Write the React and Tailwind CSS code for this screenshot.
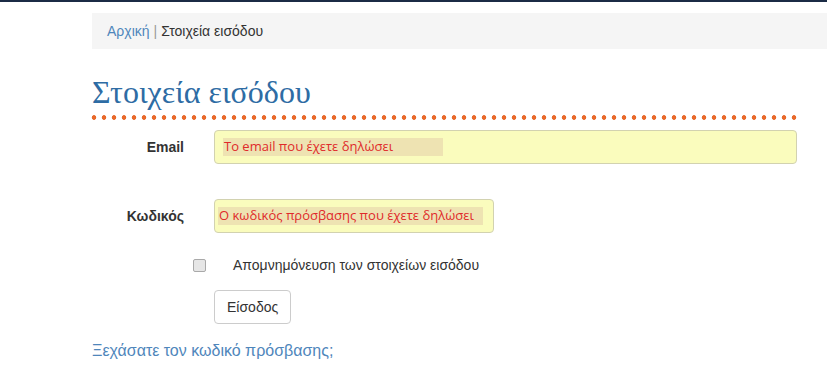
export default function App() {
  return (
    <div className="w-[827px] h-[382px] overflow-hidden bg-white font-['Liberation_Sans',Arial,sans-serif] text-[14px] text-[#333]">
      <div className="h-[2px] bg-[#1b2b45]" />
      <div className="pl-[92px]">
        <div className="mt-[11px] h-[36px] bg-[#f5f5f5] pl-[15px] flex items-center">
          <span className="text-[#4f86bb]">Αρχική</span>
          <span className="text-[#999] mx-[4px]">|</span>
          <span className="text-[#333]">Στοιχεία εισόδου</span>
        </div>
        <h1 className="mt-[26px] font-['Liberation_Serif',serif] text-[32px] leading-[34px] text-[#2e6ca4]">
          Στοιχεία εισόδου
        </h1>
        <div className="mt-[6px] -ml-[3px] w-[710px] h-[5px] bg-[radial-gradient(circle,#e8692b_2px,transparent_2.6px)] bg-[length:10px_5px]" />

        <div className="mt-[10px] flex items-center">
          <label className="w-[92px] text-right font-bold text-[#333]">Email</label>
          <div className="ml-[30px] w-[583px] h-[34px] rounded-[4px] border border-[#d2d2b0] bg-[#fafcbd] flex items-center pl-[8px]">
            <span className="whitespace-nowrap w-[220px] bg-[#eee3b2] h-[18px] pl-[1px] flex items-center font-['Open_Sans',sans-serif] text-[13px] text-[#e02a2a]">
              Το email που έχετε δηλώσει
            </span>
          </div>
        </div>

        <div className="mt-[35px] flex items-center">
          <label className="w-[92px] text-right font-bold text-[#333]">Κωδικός</label>
          <div className="ml-[30px] w-[280px] h-[34px] rounded-[4px] border border-[#d2d2b0] bg-[#fafcbd] flex items-center pl-[3px]">
            <span className="whitespace-nowrap w-[265px] bg-[#eee3b2] h-[18px] pl-[1px] flex items-center font-['Open_Sans',sans-serif] text-[13px] text-[#e02a2a]">
              Ο κωδικός πρόσβασης που έχετε δηλώσει
            </span>
          </div>
        </div>

        <div className="mt-[22px] h-[20px] flex items-center">
          <div className="ml-[101px] w-[13px] h-[13px] rounded-[2px] border border-[#a9a9a9] bg-[#e6e6e6]" />
          <span className="ml-[27px] text-[#333]">Απομνημόνευση των στοιχείων εισόδου</span>
        </div>

        <div className="mt-[15px] ml-[122px]">
          <button className="h-[34px] px-[12px] rounded-[4px] border border-[#ccc] bg-white text-[#333] text-[14px]">
            Είσοδος
          </button>
        </div>

        <div className="mt-[16px] text-[16px] leading-[22px] text-[#4f86bb]">
          Ξεχάσατε τον κωδικό πρόσβασης;
        </div>
      </div>
    </div>
  );
}
